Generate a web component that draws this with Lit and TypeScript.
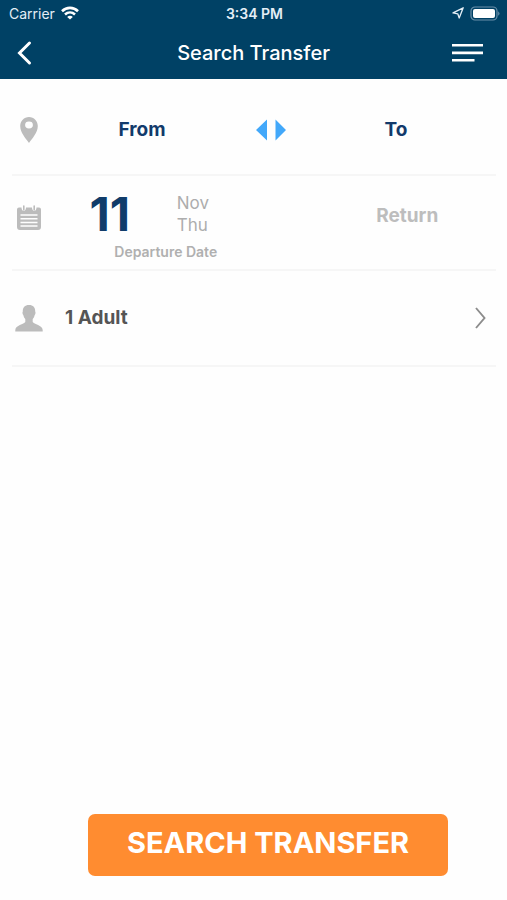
import { LitElement, html, css } from "lit";
import { customElement, state } from "lit/decorators.js";

@customElement("app-root")
export class AppRoot extends LitElement {
  @state() private from = "From";
  @state() private to = "To";

  static styles = css`
    :host {
      display: flex;
      flex-direction: column;
      min-height: 100vh;
      background: #fefefe;
      font-family: Inter, "Liberation Sans", sans-serif;
    }
    button {
      margin: 0;
      padding: 0;
      border: 0;
      background: none;
      color: inherit;
      font: inherit;
      cursor: pointer;
    }
    svg {
      display: block;
    }
    .top {
      background: #004165;
      color: #fff;
    }
    .status {
      display: grid;
      grid-template-columns: 1fr auto 1fr;
      align-items: center;
      height: 26px;
      padding: 0 7px 0 9px;
      font-size: 14px;
      color: #e4eef6;
    }
    .carrier,
    .indicators {
      display: flex;
      align-items: center;
      gap: 6px;
    }
    .indicators {
      justify-content: flex-end;
    }
    .clock {
      font-weight: 600;
    }
    .nav {
      display: grid;
      grid-template-columns: 48px 1fr 48px;
      align-items: center;
      height: 53px;
      padding: 0 16px;
      box-sizing: border-box;
    }
    .menu {
      justify-self: end;
      padding-right: 8px;
    }
    .title {
      margin: 0;
      text-align: center;
      font-size: 20px;
      line-height: 24px;
      font-weight: 500;
    }
    .list {
      margin: 0 11px 0 12px;
    }
    .row {
      display: grid;
      align-items: center;
      height: 96px;
      box-sizing: border-box;
      border-bottom: 2px solid #f6f6f6;
    }
    .icon {
      justify-self: center;
    }
    .route {
      grid-template-columns: 33px 194fr 64px 186fr;
      height: 97px;
      padding: 6px 7px 0 0;
    }
    .place {
      font-size: 19px;
      line-height: 24px;
      font-weight: 700;
      color: #123a6b;
    }
    .swap {
      justify-self: center;
    }
    .dates {
      grid-template-columns: 33px 242fr 210fr;
      height: 95px;
    }
    .dates .icon {
      margin-bottom: 10px;
    }
    .departure {
      display: grid;
      justify-items: center;
      padding-top: 6px;
    }
    .day {
      display: grid;
      grid-template-columns: 1fr 1fr;
      align-items: center;
      width: 100%;
      box-sizing: border-box;
      padding-right: 2px;
    }
    .number {
      justify-self: center;
      padding-left: 10px;
      font-size: 47px;
      line-height: 44px;
      font-weight: 700;
      color: #103c6a;
    }
    .month {
      padding-left: 12px;
      text-align: left;
      font-size: 17px;
      line-height: 22px;
      color: #adadad;
    }
    .caption {
      margin-top: 8px;
      font-size: 14px;
      line-height: 16px;
      font-weight: 600;
      color: #b0b0b0;
    }
    .return {
      padding-left: 32px;
      padding-bottom: 14px;
      font-size: 19px;
      line-height: 24px;
      font-weight: 700;
      color: #bdbdbd;
    }
    .people {
      grid-template-columns: 33px 1fr;
    }
    .adults {
      display: flex;
      align-items: center;
      justify-content: space-between;
      padding: 0 10px 0 20px;
      font-size: 19px;
      line-height: 24px;
      font-weight: 700;
      color: #555;
    }
    .footer {
      margin-top: auto;
      padding: 24px 59px 24px 88px;
    }
    .search {
      display: block;
      width: 100%;
      height: 62px;
      padding-bottom: 4px;
      border-radius: 7px;
      background: #ff8c30;
      color: #fff;
      font-size: 29px;
      line-height: 36px;
      font-weight: 700;
      white-space: nowrap;
    }
  `;

  private swapPlaces() {
    [this.from, this.to] = [this.to, this.from];
  }

  render() {
    return html`
      <header class="top">
        <div class="status">
          <span class="carrier">
            Carrier
            <svg width="18" height="14" viewBox="0 0 18 14" fill="none" stroke="#fff" stroke-width="2.6">
              <path d="M1 5.2C5.6.7 12.4.7 17 5.2" />
              <path d="M4 8.5C6.900 5.900 11.100 5.900 14 8.500" />
              <path d="M9 13.600L6.200 10.900C7.800 9.500 10.200 9.500 11.800 10.900Z" fill="#fff" stroke="none" />
            </svg>
          </span>
          <span class="clock">3:34 PM</span>
          <span class="indicators">
            <svg width="12" height="12" viewBox="0 0 12 12" fill="none" stroke="#e4eef6" stroke-width="1.3" stroke-linejoin="round">
              <path d="M11.200 .8L7.200 11L5.800 6.800L1 5.900Z" />
            </svg>
            <svg width="30" height="15" viewBox="0 0 30 15">
              <rect x="1" y="1" width="26" height="13" rx="4" fill="none" stroke="#6a90aa" stroke-width="1.2" />
              <rect x="3" y="3" width="22" height="9" rx="2" fill="#fff" />
              <path d="M28.200 5.200Q30.800 7.500 28.200 9.800Z" fill="#6a90aa" />
            </svg>
          </span>
        </div>
        <nav class="nav">
          <button class="back" aria-label="Back">
            <svg width="18" height="26" viewBox="0 0 18 26" fill="none" stroke="#fff" stroke-width="3" stroke-linecap="round" stroke-linejoin="miter">
              <path d="M13.500 3L3.500 13L13.500 23" />
            </svg>
          </button>
          <h1 class="title">Search Transfer</h1>
          <button class="menu" aria-label="Menu">
            <svg width="31" height="20" viewBox="0 0 31 20" fill="#fff">
              <path d="M0 1H31V3.600H0ZM0 8.600H31V11.200H0ZM0 16H22.500V18.600H0Z" />
            </svg>
          </button>
        </nav>
      </header>

      <main class="list">
        <section class="row route">
          <svg class="icon" width="18" height="26" viewBox="0 0 18 26">
            <path d="M9 0C4 0 .2 4 .2 9C.2 15.500 5.500 21 9 26C12.500 21 17.800 15.500 17.800 9C17.800 4 14 0 9 0ZM9 4.600A3.900 3.400 0 1 1 9 11.400A3.900 3.400 0 1 1 9 4.600Z" fill="#bcbcbc" fill-rule="evenodd" />
          </svg>
          <button class="place">${this.from}</button>
          <button class="swap" aria-label="Swap places" @click=${this.swapPlaces}>
            <svg width="30" height="22" viewBox="0 0 30 22" fill="#42a8fa">
              <path d="M11 .5V21.500L0 11ZM19.500 .5V21.500L30 11Z" />
            </svg>
          </button>
          <button class="place">${this.to}</button>
        </section>

        <section class="row dates">
          <svg class="icon" width="24" height="26" viewBox="0 0 24 26">
            <path d="M2 2.500H4.500C4.500 7 9 7 9 2.500H15C15 7 19.500 7 19.500 2.500H22Q24 2.500 24 4.500V22Q24 25 21 25H3Q0 25 0 22V4.500Q0 2.500 2 2.500Z" fill="#bcbcbc" />
            <path d="M6.800 1V5M17.200 1V5" stroke="#bcbcbc" stroke-width="1.600" stroke-linecap="round" />
            <path d="M3.500 10H20.500M3.500 13.700H20.500M3.500 17.400H20.500M3.500 21.100H20.500" stroke="#fefefe" stroke-width="1.500" />
          </svg>
          <button class="departure">
            <span class="day">
              <span class="number">11</span>
              <span class="month">Nov<br />Thu</span>
            </span>
            <span class="caption">Departure Date</span>
          </button>
          <button class="return">Return</button>
        </section>

        <section class="row people">
          <svg class="icon" width="28" height="27" viewBox="0 0 28 27">
            <path d="M14 0C9.800 0 7.600 2.400 7.800 6.500C7.200 7 7.500 9.500 8.300 10C8.700 12 9.500 13.200 10.300 14V17C9 19.500 .5 20 .3 25V26.500H27.700V25C27.500 20 19 19.500 17.700 17V14C18.500 13.200 19.300 12 19.700 10C20.500 9.500 20.800 7 20.200 6.500C20.400 2.400 18.200 0 14 0Z" fill="#bcbcbc" />
          </svg>
          <button class="adults">
            1 Adult
            <svg width="11" height="22" viewBox="0 0 11 22" fill="none" stroke="#8c8c8c" stroke-width="1.900">
              <path d="M1 1L9.500 11L1 21" />
            </svg>
          </button>
        </section>
      </main>

      <footer class="footer">
        <button class="search">SEARCH TRANSFER</button>
      </footer>
    `;
  }
}
